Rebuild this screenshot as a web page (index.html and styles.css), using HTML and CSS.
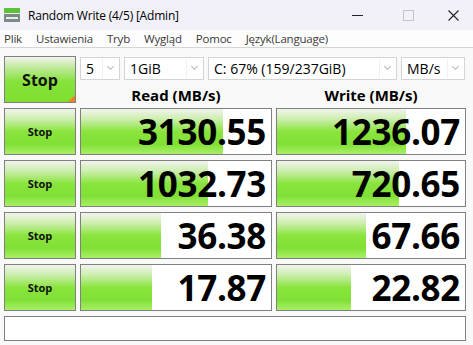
FILE: index.html
```html
<!DOCTYPE html>
<html lang="pl">
<head>
    <meta charset="UTF-8">
    <title>Random Write (4/5) [Admin]</title>
    <link rel="stylesheet" href="styles.css">
</head>
<body>

<div class="titlebar">
    <svg class="app-icon" width="16" height="14" viewBox="0 0 16 14">
        <rect x="0" y="0" width="16" height="5" fill="#5cc23a"/>
        <rect x="0" y="6" width="16" height="8" fill="#7b8a84"/>
        <rect x="2" y="9" width="12" height="2" fill="#e8ece9"/>
    </svg>
    <span class="title">Random Write (4/5) [Admin]</span>
    <div class="controls">
        <span class="ctl ctl-min"></span>
        <span class="ctl ctl-max"></span>
        <svg class="ctl" width="11" height="11" viewBox="0 0 11 11">
            <path d="M0.5 0.5 L10.5 10.5 M10.5 0.5 L0.5 10.5" stroke="#222" stroke-width="1.1"/>
        </svg>
    </div>
</div>

<div class="menubar">
    <span>Plik</span>
    <span>Ustawienia</span>
    <span>Tryb</span>
    <span>Wygląd</span>
    <span>Pomoc</span>
    <span>Język(Language)</span>
</div>

<div class="main">
    <button class="stop stop-all">Stop</button>

    <div class="top">
        <div class="combos">
            <div class="combo c-count"><span>5</span><i></i></div>
            <div class="combo c-size"><span>1GiB</span><i></i></div>
            <div class="combo c-drive"><span>C: 67% (159/237GiB)</span><i></i></div>
            <div class="combo c-unit"><span>MB/s</span><i></i></div>
        </div>
        <div class="heads">
            <div class="head">Read (MB/s)</div>
            <div class="head">Write (MB/s)</div>
        </div>
    </div>

    <button class="stop">Stop</button>
    <div class="cell"><div class="bar" style="width: 142px"></div><span>3130.55</span></div>
    <div class="cell"><div class="bar" style="width: 129px"></div><span>1236.07</span></div>

    <button class="stop">Stop</button>
    <div class="cell"><div class="bar" style="width: 127px"></div><span>1032.73</span></div>
    <div class="cell"><div class="bar" style="width: 122px"></div><span>720.65</span></div>

    <button class="stop">Stop</button>
    <div class="cell"><div class="bar" style="width: 80px"></div><span>36.38</span></div>
    <div class="cell"><div class="bar" style="width: 89px"></div><span>67.66</span></div>

    <button class="stop">Stop</button>
    <div class="cell"><div class="bar" style="width: 71px"></div><span>17.87</span></div>
    <div class="cell"><div class="bar" style="width: 74px"></div><span>22.82</span></div>

    <div class="status"></div>
</div>

</body>
</html>
```

FILE: styles.css
```css
body {
    margin: 0;
    width: 473px;
    height: 345px;
    overflow: hidden;
    background-color: #f9f9f9;
    font-family: "Open Sans", "Noto Sans", sans-serif;
    color: #000;
}
.titlebar {
    height: 30px;
    display: flex;
    align-items: center;
    background-color: #f2f0f9;
    font-size: 12px;
}
.app-icon {
    margin: 0 8px 0 4px;
}
.title {
    letter-spacing: -0.2px;
}
.controls {
    margin-left: auto;
    display: flex;
    align-items: center;
}
.ctl {
    display: block;
}
.ctl-min {
    width: 11px;
    height: 1px;
    background-color: #222;
    margin-right: 40px;
}
.ctl-max {
    width: 9px;
    height: 9px;
    border: 1px solid #c4c3c9;
    margin-right: 34px;
}
.controls svg {
    margin-right: 14px;
}
.menubar {
    height: 17px;
    display: flex;
    align-items: center;
    gap: 14px;
    padding-left: 4px;
    background-color: #fdfdfd;
    border-bottom: 1px solid #d6d6d6;
    font-size: 11.5px;
    color: #3a3a3a;
    letter-spacing: -0.2px;
}
.main {
    display: grid;
    grid-template-columns: 72px 192px 190px;
    grid-template-rows: repeat(5, 47px) 25px;
    column-gap: 4px;
    row-gap: 5px;
    padding: 8px 7px 0 4px;
}
.stop {
    margin: 0;
    padding: 0;
    border: 1px solid #808080;
    background: linear-gradient(to bottom, #f1f3ee 0%, #cdeeb0 22%, #8ae43e 50%, #80e034 78%, #a8f068 100%);
    font-family: inherit;
    font-weight: bold;
    font-size: 11px;
    color: #111;
    cursor: pointer;
}
.stop-all {
    position: relative;
    font-size: 16px;
    background: linear-gradient(to bottom, #f1f3ee 0%, #bde995 25%, #86e23a 55%, #7fdf30 100%);
}
.stop-all::after {
    content: "";
    position: absolute;
    right: 0;
    bottom: 0;
    border-left: 7px solid transparent;
    border-bottom: 7px solid #f08224;
}
.top {
    grid-column: 2 / 4;
    display: flex;
    flex-direction: column;
}
.combos {
    display: flex;
    gap: 4px;
    margin-top: 1px;
}
.combo {
    height: 21px;
    display: flex;
    align-items: center;
    background-color: #fff;
    border: 1px solid #d4d4d4;
    font-size: 14px;
}
.combo span {
    flex: 1;
    height: 19px;
    line-height: 19px;
    padding-left: 5px;
    border-right: 1px solid #f0f0f0;
    white-space: nowrap;
    overflow: hidden;
}
.combo i {
    width: 16px;
    height: 19px;
    position: relative;
}
.combo i::before {
    content: "";
    position: absolute;
    left: 5px;
    top: 5px;
    width: 4px;
    height: 4px;
    border-right: 1px solid #b8b8b8;
    border-bottom: 1px solid #b8b8b8;
    transform: rotate(45deg);
}
.c-count { width: 38px; }
.c-size { width: 78px; }
.c-drive { width: 187px; }
.c-unit { width: 62px; }
.heads {
    display: flex;
    gap: 4px;
    flex: 1;
    align-items: center;
}
.head {
    flex: 1;
    text-align: center;
    font-weight: bold;
    font-size: 15px;
    padding-top: 5px;
}
.head:first-child {
    flex: 0 0 192px;
}
.cell {
    position: relative;
    display: flex;
    align-items: center;
    justify-content: flex-end;
    background-color: #fff;
    border: 1px solid #808080;
}
.bar {
    position: absolute;
    left: 0;
    top: 0;
    bottom: 0;
    background: linear-gradient(to bottom, #f1f3ee 0%, #cdeeb0 22%, #8ae43e 50%, #80e034 78%, #a8f068 100%);
}
.cell span {
    position: relative;
    padding-right: 5px;
    font-size: 35px;
    font-weight: bold;
    letter-spacing: -0.3px;
    line-height: 1;
}
.status {
    grid-column: 1 / 4;
    background-color: #fff;
    border: 1px solid #808080;
}
```
